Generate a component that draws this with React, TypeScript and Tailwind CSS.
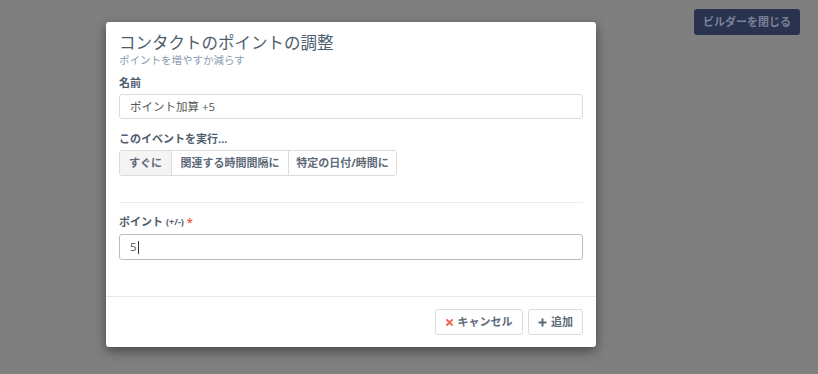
import React from "react";

export default function App() {
  const font = { fontFamily: '"Open Sans", "Noto Sans CJK JP", sans-serif' };
  return (
    <div className="relative h-[374px] w-[818px] overflow-hidden bg-[#7f7f7f]" style={font}>
      <div className="absolute right-[18px] top-[9px] flex h-[26px] w-[106px] items-center justify-center rounded-[3px] bg-[#29324f] text-[11px] font-bold text-[#7b8296]">
        ビルダーを閉じる
      </div>
      <div className="absolute left-[106px] top-[22px] flex h-[325px] w-[490px] flex-col rounded-[3px] bg-white shadow-[0_4px_12px_rgba(0,0,0,0.45)]">
        <div className="flex flex-1 flex-col px-[13px] pt-[10px]">
          <div className="text-[16.5px] leading-[22px] text-[#4e5d6d]">コンタクトのポイントの調整</div>
          <div className="text-[10.5px] leading-[12px] text-[#8a9bb1]">ポイントを増やすか減らす</div>
          <div className="mt-[10px] text-[11px] font-bold leading-[14px] text-[#4e5d6d]">名前</div>
          <div className="mt-[4px] flex h-[25px] items-center rounded-[3px] border border-[#dcdcdc] px-[10px] text-[11.5px] text-[#555]">
            ポイント加算 +5
          </div>
          <div className="mt-[13px] text-[11px] font-bold leading-[14px] text-[#4e5d6d]">このイベントを実行...</div>
          <div className="mt-[4px] flex h-[26px] w-fit rounded-[3px] border border-[#dcdcdc] text-[11px] font-bold text-[#5d6a78]">
            <div className="flex w-[51px] items-center justify-center bg-[#f4f4f4]">すぐに</div>
            <div className="flex w-[117px] items-center justify-center border-l border-[#dcdcdc]">関連する時間間隔に</div>
            <div className="flex w-[108px] items-center justify-center border-l border-[#dcdcdc]">特定の日付/時間に</div>
          </div>
          <div className="mt-[26px] h-px bg-[#ececec]" />
          <div className="mt-[12px] flex items-center text-[11px] font-bold leading-[14px] text-[#4e5d6d]">
            ポイント<span className="ml-[3px] text-[9px]">(+/-)</span>
            <span className="ml-[3px] text-[#f0644c]">*</span>
          </div>
          <div className="mt-[5px] flex h-[26px] items-center rounded-[3px] border border-[#bdbdbd] px-[10px] text-[11.5px] text-[#555]">
            5<span className="ml-px h-[13px] w-px bg-[#333]" />
          </div>
        </div>
        <div className="flex h-[51px] items-center justify-end gap-[5px] border-t border-[#e8e8e8] px-[13px]">
          <div className="flex h-[26px] w-[88px] items-center justify-center gap-[5px] rounded-[3px] border border-[#dcdcdc] text-[11px] font-bold text-[#5d6a78]">
            <svg width="7" height="7" viewBox="0 0 7 7">
              <path d="M1 1L6 6M6 1L1 6" stroke="#f0644c" strokeWidth="1.8" strokeLinecap="round" />
            </svg>
            キャンセル
          </div>
          <div className="flex h-[26px] w-[55px] items-center justify-center gap-[4px] rounded-[3px] border border-[#dcdcdc] text-[11px] font-bold text-[#5d6a78]">
            <svg width="9" height="9" viewBox="0 0 9 9">
              <path d="M4.5 0.5V8.5M0.5 4.5H8.5" stroke="#5d6a78" strokeWidth="2" />
            </svg>
            追加
          </div>
        </div>
      </div>
    </div>
  );
}
